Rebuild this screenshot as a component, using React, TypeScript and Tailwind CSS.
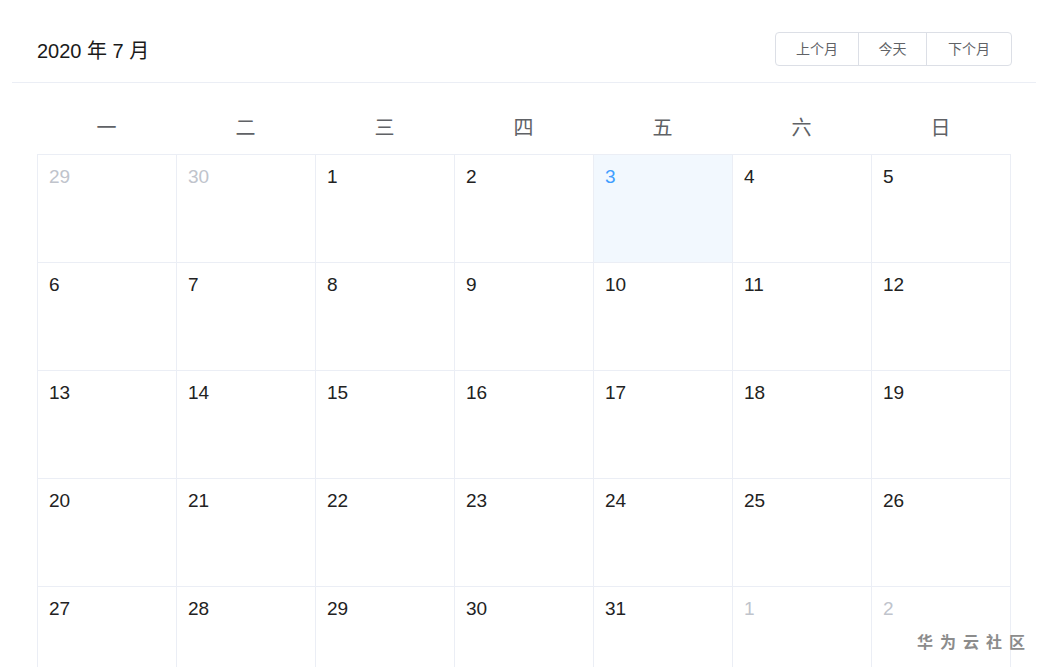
const weekdays = ["一", "二", "三", "四", "五", "六", "日"];

type Day = { n: number; other?: boolean; today?: boolean };

const days: Day[] = [
  { n: 29, other: true },
  { n: 30, other: true },
  ...Array.from({ length: 31 }, (_, i) => ({ n: i + 1, today: i + 1 === 3 })),
  { n: 1, other: true },
  { n: 2, other: true },
];

const font = { fontFamily: '"Liberation Sans", Arial, "Noto Sans CJK SC", sans-serif' };

export default function App() {
  return (
    <div className="relative min-h-screen bg-white overflow-hidden" style={font}>
      <div className="ml-[12px] w-[1024px]">
        {/* Header */}
        <div className="flex items-center justify-between pl-[25px] pr-[24px] pt-[32px] pb-[16px] border-b border-[#ebeef5]">
          <div className="pt-[4px] text-[20px] text-[#1a1a1a] leading-none">2020 年 7 月</div>
          <div className="flex h-[34px] border border-[#dcdfe6] rounded-[4px] text-[14px] text-[#606266]">
            <button className="w-[83px] flex items-center justify-center border-r border-[#dcdfe6]">上个月</button>
            <button className="w-[68px] flex items-center justify-center border-r border-[#dcdfe6]">今天</button>
            <button className="w-[84px] flex items-center justify-center">下个月</button>
          </div>
        </div>

        {/* Body */}
        <div className="pl-[25px] pr-[24px] pt-[18px]">
          <div className="grid grid-cols-[repeat(7,139px)] h-[53px] items-center text-[20px] text-[#606266]">
            {weekdays.map((w) => (
              <div key={w} className="text-center">{w}</div>
            ))}
          </div>
          <div className="grid grid-cols-[repeat(7,139px)] w-[974px] border-l border-t border-[#ebeef5]">
            {days.map((d, i) => (
              <div
                key={i}
                className={`h-[108px] border-r border-b border-[#ebeef5] pl-[11px] pt-[8px] text-[19px] leading-[1.5] ${
                  d.today ? "bg-[#f2f8fe] text-[#409eff]" : d.other ? "text-[#c0c4cc]" : "text-[#222222]"
                }`}
              >
                {d.n}
              </div>
            ))}
          </div>
        </div>
      </div>

      {/* Watermark */}
      <div
        className="absolute right-[6px] top-[633px] text-[16px] font-semibold tracking-[7px] text-[#8c8c8c] leading-none"
        style={{ fontFamily: '"Noto Sans CJK SC", sans-serif' }}
      >
        华为云社区
      </div>
    </div>
  );
}
